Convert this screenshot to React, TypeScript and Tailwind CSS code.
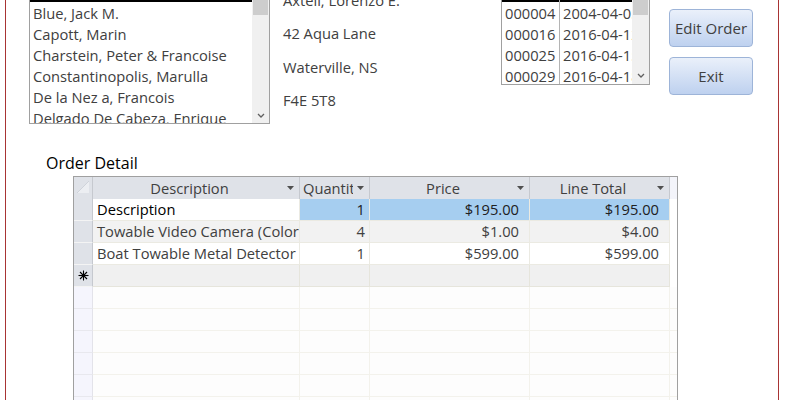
import React from "react";

function Chevron() {
  return (
    <svg width="8" height="5" viewBox="0 0 8 5">
      <path d="M1 1 L4 4 L7 1" stroke="#606060" strokeWidth="1.3" fill="none" />
    </svg>
  );
}

function HeadArrow() {
  return (
    <svg width="7" height="4" viewBox="0 0 7 4" className="shrink-0">
      <path d="M0 0 L7 0 L3.5 4 Z" fill="#505050" />
    </svg>
  );
}

function Star() {
  return (
    <svg width="11" height="11" viewBox="0 0 11 11">
      <g stroke="#000" strokeWidth="1.1">
        <line x1="5.5" y1="0.5" x2="5.5" y2="10.5" />
        <line x1="0.5" y1="5.5" x2="10.5" y2="5.5" />
        <line x1="2" y1="2" x2="9" y2="9" />
        <line x1="9" y1="2" x2="2" y2="9" />
      </g>
    </svg>
  );
}

const customers = [
  "Blue, Jack M.",
  "Capott, Marin",
  "Charstein, Peter & Francoise",
  "Constantinopolis, Marulla",
  "De la Nez a, Francois",
  "Delgado De Cabeza, Enrique",
];

const orders = [
  ["000004", "2004-04-05"],
  ["000016", "2016-04-12"],
  ["000025", "2016-04-15"],
  ["000029", "2016-04-18"],
];

const lines = [
  { d: "Description", q: "1", p: "$195.00", t: "$195.00" },
  { d: "Towable Video Camera (Color)", q: "4", p: "$1.00", t: "$4.00" },
  { d: "Boat Towable Metal Detector", q: "1", p: "$599.00", t: "$599.00" },
];

export default function App() {
  return (
    <div className="w-[786px] h-[400px] overflow-hidden bg-white font-['Open_Sans','Noto_Sans',sans-serif] text-[14.7px] text-[#404040]">
      <div className="ml-[5px] w-[774px] h-[400px] border-x border-[#a83434]">
        {/* top section */}
        <div className="flex items-start h-[153px]">
          {/* customer list */}
          <div className="ml-[23px] w-[241px] h-[124px] border-x border-b border-[#a0a0a0] flex overflow-hidden">
            <div className="flex-1 min-w-0 overflow-hidden">
              <div className="h-[2px] bg-black" />
              <div className="pt-[1px]">
                {customers.map((c) => (
                  <div key={c} className="h-[21px] leading-[21px] pl-[3px] whitespace-nowrap">
                    {c}
                  </div>
                ))}
              </div>
            </div>
            <div className="w-[17px] bg-[#f0f0f0] flex flex-col items-center pb-[5px]">
              <div className="h-[15px] w-[15px] bg-[#cdcdcd]" />
              <div className="flex-1" />
              <Chevron />
            </div>
          </div>

          {/* address */}
          <div className="ml-[13px] w-[218px] -mt-[10px] leading-[20px] whitespace-nowrap">
            <div className="h-[20px]">Axtell, Lorenzo E.</div>
            <div className="h-[20px] mt-[13px]">42 Aqua Lane</div>
            <div className="h-[20px] mt-[14px]">Waterville, NS</div>
            <div className="h-[20px] mt-[13px]">F4E 5T8</div>
          </div>

          {/* orders list */}
          <div className="w-[149px] h-[85px] border-x border-b border-[#a0a0a0] flex overflow-hidden">
            <div className="flex-1 min-w-0 overflow-hidden relative">
              <div className="h-[2px] bg-black" />
              <div className="absolute left-[57px] top-0 bottom-0 w-[1px] bg-[#b4b4b4]" />
              <div className="pt-[1px]">
                {orders.map(([n, d]) => (
                  <div key={n} className="h-[21px] leading-[21px] flex whitespace-nowrap">
                    <div className="w-[58px] pl-[3px] overflow-hidden">{n}</div>
                    <div className="flex-1 pl-[3px] overflow-hidden">{d}</div>
                  </div>
                ))}
              </div>
            </div>
            <div className="w-[17px] bg-[#f0f0f0] flex flex-col items-center pb-[6px]">
              <div className="h-[15px] w-[15px] bg-[#cdcdcd]" />
              <div className="flex-1" />
              <Chevron />
            </div>
          </div>

          {/* buttons */}
          <div className="ml-[19px] mt-[9px] flex flex-col gap-[10px]">
            <button className="w-[84px] h-[38px] rounded-[4px] border border-[#9db4d8] bg-gradient-to-b from-[#eaf0fa] to-[#bed1ef] text-[#404040] text-[15px]">
              Edit Order
            </button>
            <button className="w-[84px] h-[38px] rounded-[4px] border border-[#9db4d8] bg-gradient-to-b from-[#eaf0fa] to-[#bed1ef] text-[#404040] text-[15px]">
              Exit
            </button>
          </div>
        </div>

        {/* Order Detail label */}
        <div className="ml-[40px] h-[20px] leading-[20px] text-[16px] text-black">Order Detail</div>

        {/* datasheet */}
        <div className="ml-[67px] mt-[3px] w-[605px] border-x border-t border-[#a0a0a0] overflow-hidden">
          {/* header */}
          <div className="flex h-[22px] bg-[#dfe2e8] text-[#404040]">
            <div className="w-[19px] border-r border-[#c6c9cf] relative">
              <svg width="12" height="12" viewBox="0 0 12 12" className="absolute left-[3px] top-[4px]">
                <path d="M0 12 L12 0 L12 12 Z" fill="#eceef2" />
                <path d="M0 12 L12 0" stroke="#cfd3da" strokeWidth="1" />
              </svg>
            </div>
            {[
              { label: "Description", w: "w-[207px]" },
              { label: "Quantity", w: "w-[70px]" },
              { label: "Price", w: "w-[160px]" },
              { label: "Line Total", w: "w-[140px]" },
            ].map((h) => (
              <div key={h.label} className={`${h.w} border-r border-[#c6c9cf] flex items-center pl-[3px] pr-[5px]`}>
                <div className="flex-1 min-w-0 overflow-hidden whitespace-nowrap text-center leading-[22px]">
                  {h.label}
                </div>
                <div className="ml-[4px]">
                  <HeadArrow />
                </div>
              </div>
            ))}
            <div className="flex-1 bg-[#f3f4fa]" />
          </div>

          {/* data rows */}
          {lines.map((r, i) => {
            const first = i === 0;
            const rowBg = i === 1 ? "bg-[#f2f2f2]" : "bg-white";
            const blue = first ? "bg-[#a6cef0] text-[#202020]" : "";
            return (
              <div key={i} className={`flex h-[22px] leading-[21px] ${rowBg}`}>
                <div className="w-[19px] bg-[#dfe2e8] border-r border-[#c6c9cf] border-b border-b-[#f4f4f4]" />
                <div
                  className={`w-[207px] border-r border-b border-[#ebeae2] pl-[4px] whitespace-nowrap overflow-hidden ${
                    first ? "bg-white text-black" : ""
                  }`}
                >
                  {r.d}
                </div>
                <div className={`w-[70px] border-r border-b border-[#ebeae2] pr-[4px] text-right ${blue}`}>{r.q}</div>
                <div className={`w-[160px] border-r border-b border-[#ebeae2] pr-[10px] text-right ${blue}`}>{r.p}</div>
                <div className={`w-[140px] border-r border-b border-[#ebeae2] pr-[10px] text-right ${blue}`}>{r.t}</div>
                <div className="flex-1 bg-white" />
              </div>
            );
          })}

          {/* new record row */}
          <div className="flex h-[22px] bg-[#f0f0f0]">
            <div className="w-[19px] bg-[#dfe2e8] border-r border-[#c6c9cf] border-b border-b-[#f4f4f4] flex items-center justify-center">
              <Star />
            </div>
            <div className="w-[207px] border-r border-b border-[#e6e5dc]" />
            <div className="w-[70px] border-r border-b border-[#e6e5dc]" />
            <div className="w-[160px] border-r border-b border-[#e6e5dc]" />
            <div className="w-[140px] border-r border-b border-[#e6e5dc]" />
            <div className="flex-1 bg-white" />
          </div>

          {/* empty rows */}
          {[0, 1, 2, 3, 4, 5].map((k) => (
            <div key={k} className="flex h-[22px] bg-[#fdfdfd]">
              <div className="w-[19px] bg-[#f5f5fd] border-r border-[#e3e3ea] border-b border-b-[#e8e8ee]" />
              <div className="w-[207px] border-r border-b border-[#f3f2ec]" />
              <div className="w-[70px] border-r border-b border-[#f3f2ec]" />
              <div className="w-[160px] border-r border-b border-[#f3f2ec]" />
              <div className="w-[140px] border-r border-b border-[#f3f2ec]" />
              <div className="flex-1 border-b border-[#f3f2ec]" />
            </div>
          ))}
        </div>
      </div>
    </div>
  );
}
